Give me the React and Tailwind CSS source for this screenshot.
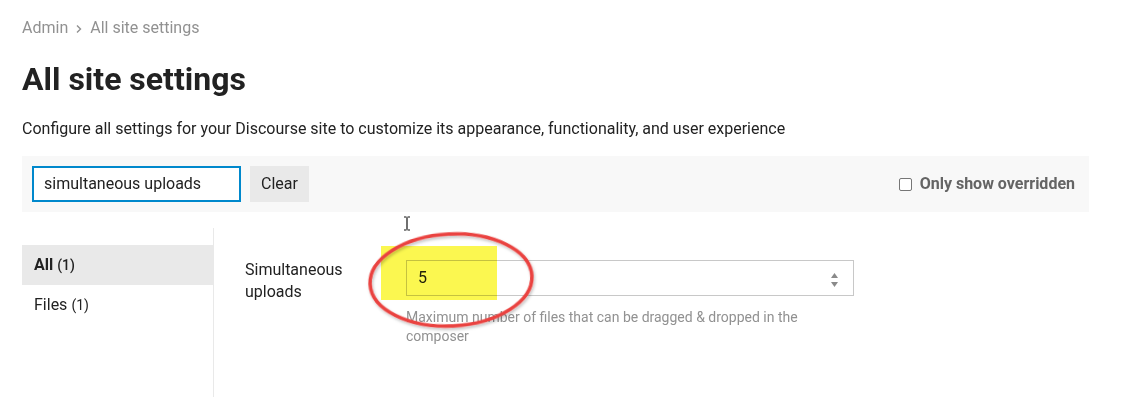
import React from "react";

const font = { fontFamily: "Roboto, 'Liberation Sans', sans-serif" };

export default function App() {
  return (
    <div className="relative w-[1122px] h-[397px] overflow-hidden bg-white text-[#222]" style={font}>
      <div className="pl-[22px] pr-[33px]">
        <div className="pt-[18px] flex items-center gap-[6px] text-[16px] leading-[20px] text-[#919191]">
          <span>Admin</span>
          <svg width="10" height="10" viewBox="0 0 10 10" className="mt-[1px]">
            <path d="M3 1.5 6.5 5 3 8.5" fill="none" stroke="#919191" strokeWidth="1.4" />
          </svg>
          <span>All site settings</span>
        </div>
        <h1 className="mt-[23px] text-[32px] leading-[36px] font-bold">All site settings</h1>
        <p className="mt-[21px] text-[16px] leading-[22px]">
          Configure all settings for your Discourse site to customize its appearance, functionality, and user experience
        </p>

        <div className="mt-[16px] h-[56px] bg-[#f8f8f8] flex items-center px-[10px]">
          <div className="w-[209px] h-[36px] border-2 border-[#0088cc] bg-white flex items-center px-[10px] text-[16px]">
            simultaneous uploads
          </div>
          <button className="ml-[9px] h-[36px] w-[59px] bg-[#e9e9e9] text-[16px] text-[#222]">Clear</button>
          <label className="ml-auto mr-[4px] flex items-center gap-[8px] text-[16px] font-bold text-[#646464]">
            <span className="w-[13px] h-[13px] rounded-[2px] border border-[#767676] bg-white" />
            Only show overridden
          </label>
        </div>

        <div className="mt-[16px] flex">
          <div className="w-[192px] border-r border-[#e9e9e9] pt-[17px] h-[200px] shrink-0">
            <div className="h-[40px] bg-[#e9e9e9] flex items-center px-[12px] text-[16px]">
              <span className="font-bold">All</span>
              <span className="ml-[4px] text-[14px] font-medium">(1)</span>
            </div>
            <div className="h-[40px] flex items-center px-[12px] text-[16px]">
              <span>Files</span>
              <span className="ml-[4px] text-[14px]">(1)</span>
            </div>
          </div>
          <div className="flex pl-[31px] pt-[32px]">
            <div className="w-[130px] text-[16px] leading-[22px]">
              <div className="-mt-[1px]">Simultaneous<br />uploads</div>
            </div>
            <div className="ml-[31px]">
              <div className="w-[448px] h-[36px] border border-[#c8c8c8] bg-white flex items-center pl-[11px] pr-[14px] text-[16px]">
                <span>5</span>
                <svg width="9" height="22" viewBox="0 0 9 22" className="ml-auto">
                  <path d="M4.5 6 8 11H1z" fill="#8a8a8a" />
                  <path d="M4.5 20 8 15H1z" fill="#8a8a8a" />
                </svg>
              </div>
              <p className="mt-[12px] w-[420px] text-[14px] leading-[19px] text-[#919191]">
                Maximum number of files that can be dragged &amp; dropped in the composer
              </p>
            </div>
          </div>
        </div>
      </div>

      {/* highlighter mark */}
      <div className="absolute left-[381px] top-[246px] w-[116px] h-[54px] bg-[#fbf750] mix-blend-multiply" />

      {/* red annotation ellipse */}
      <svg className="absolute left-0 top-0" width="1122" height="397">
        <defs>
          <filter id="sh" x="-20%" y="-20%" width="140%" height="140%">
            <feDropShadow dx="1" dy="2" stdDeviation="1.5" floodColor="#000" floodOpacity="0.25" />
          </filter>
        </defs>
        <ellipse cx="451" cy="280" rx="81" ry="46" transform="rotate(-3 451 280)" fill="none" stroke="#ea4340" strokeWidth="3.5" filter="url(#sh)" />
      </svg>

      {/* text cursor */}
      <svg className="absolute left-[403px] top-[216px]" width="8" height="15" viewBox="0 0 8 15">
        <path d="M1 1h2.5M4.5 1H7M4 1.5v12M1 14h2.5M4.5 14H7" stroke="#111" strokeWidth="1.2" fill="none" />
      </svg>
    </div>
  );
}
